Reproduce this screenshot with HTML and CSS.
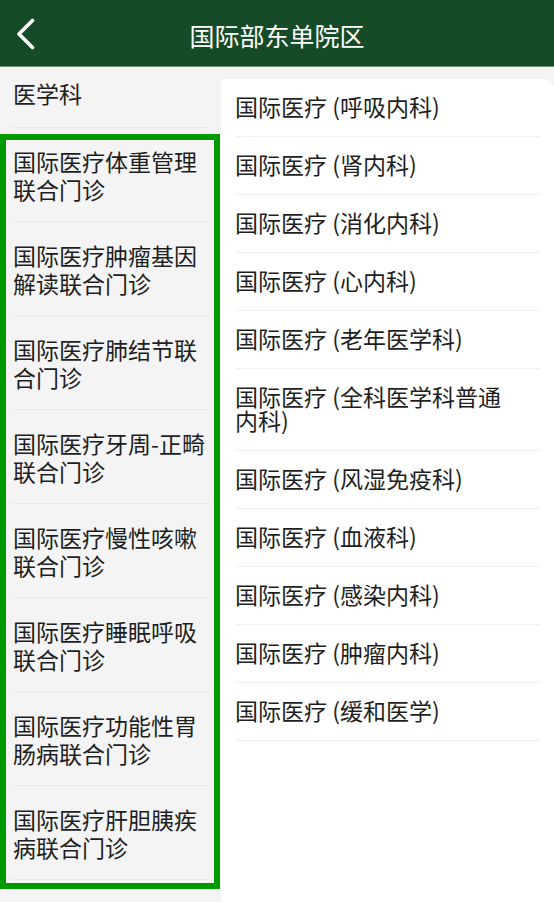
FILE: index.html
```html
<!DOCTYPE html>
<html lang="zh-CN">
<head>
<meta charset="utf-8">
<title>国际部东单院区</title>
<link rel="stylesheet" href="styles.css">
</head>
<body>
<div class="app">
  <header class="topbar">
    <div class="back">
      <svg width="20" height="32" viewBox="0 0 20 32" aria-hidden="true">
        <polyline points="16.5,2.5 3,16 16.5,29.5" fill="none" stroke="#ffffff" stroke-width="3.6" stroke-linecap="round" stroke-linejoin="round"/>
      </svg>
    </div>
    <h1 class="title">国际部东单院区</h1>
    <div class="spacer"></div>
  </header>
  <div class="content">
    <aside class="menu">
      <div class="menu-item first"><span class="menu-text">医学科</span></div>
      <div class="menu-item"><span class="menu-text">国际医疗体重管理联合门诊</span></div>
      <div class="menu-item"><span class="menu-text">国际医疗肿瘤基因解读联合门诊</span></div>
      <div class="menu-item"><span class="menu-text">国际医疗肺结节联合门诊</span></div>
      <div class="menu-item"><span class="menu-text">国际医疗牙周-正畸联合门诊</span></div>
      <div class="menu-item"><span class="menu-text">国际医疗慢性咳嗽联合门诊</span></div>
      <div class="menu-item"><span class="menu-text">国际医疗睡眠呼吸联合门诊</span></div>
      <div class="menu-item"><span class="menu-text">国际医疗功能性胃肠病联合门诊</span></div>
      <div class="menu-item"><span class="menu-text">国际医疗肝胆胰疾病联合门诊</span></div>
      <div class="highlight"></div>
    </aside>
    <main class="panel">
      <ul class="dept-list">
        <li class="dept"><span class="dept-text">国际医疗 (呼吸内科)</span></li>
        <li class="dept"><span class="dept-text">国际医疗 (肾内科)</span></li>
        <li class="dept"><span class="dept-text">国际医疗 (消化内科)</span></li>
        <li class="dept"><span class="dept-text">国际医疗 (心内科)</span></li>
        <li class="dept"><span class="dept-text">国际医疗 (老年医学科)</span></li>
        <li class="dept"><span class="dept-text">国际医疗 (全科医学科普通内科)</span></li>
        <li class="dept"><span class="dept-text">国际医疗 (风湿免疫科)</span></li>
        <li class="dept"><span class="dept-text">国际医疗 (血液科)</span></li>
        <li class="dept"><span class="dept-text">国际医疗 (感染内科)</span></li>
        <li class="dept"><span class="dept-text">国际医疗 (肿瘤内科)</span></li>
        <li class="dept"><span class="dept-text">国际医疗 (缓和医学)</span></li>
      </ul>
    </main>
  </div>
</div>
</body>
</html>
```
FILE: styles.css
```css
* {
  box-sizing: border-box;
}

html, body {
  margin: 0;
  padding: 0;
}

body {
  width: 554px;
  height: 902px;
  overflow: hidden;
  background: #f4f4f4;
  font-family: "Noto Sans CJK SC", "Noto Sans", sans-serif;
  color: #1e1e1e;
}

.app {
  display: flex;
  flex-direction: column;
  height: 902px;
}

.topbar {
  display: grid;
  grid-template-columns: 60px 1fr 60px;
  align-items: center;
  height: 67px;
  padding-top: 4px;
  background: #154c27;
  border-bottom: 1px solid #6f8f77;
  flex-shrink: 0;
}

.back {
  padding-left: 16px;
  display: flex;
  align-items: center;
  margin-top: -3px;
}

.back svg {
  display: block;
}

.title {
  margin: 0;
  text-align: center;
  font-size: 25px;
  line-height: 26px;
  font-weight: normal;
  color: #ffffff;
}

.content {
  display: flex;
  flex: 1;
  min-height: 0;
}

.menu {
  position: relative;
  width: 221px;
  flex-shrink: 0;
  background: #f4f4f4;
}

.menu-item {
  margin-left: 12px;
  width: 197px;
  padding: 19px 0 18px 1px;
  border-bottom: 1px solid #e9e9e9;
}

.menu-item.first {
  padding: 12px 0 20px 1px;
}

.menu-text {
  display: block;
  font-size: 23px;
  line-height: 28px;
}

.highlight {
  position: absolute;
  left: 0;
  top: 67px;
  width: 220px;
  height: 755px;
  border: 6px solid #009900;
  pointer-events: none;
}

.panel {
  flex: 1;
  margin-top: 12px;
  background: #ffffff;
  border-top-right-radius: 10px;
  border-top-left-radius: 2px;
}

.dept-list {
  list-style: none;
  margin: 0;
  padding: 0;
}

.dept {
  margin: 0 13px 0 14px;
  padding: 14.5px 0 18.5px;
  border-bottom: 1px solid #efefef;
}

.dept-text {
  display: block;
  max-width: 275px;
  font-size: 23px;
  line-height: 24px;
}
```
